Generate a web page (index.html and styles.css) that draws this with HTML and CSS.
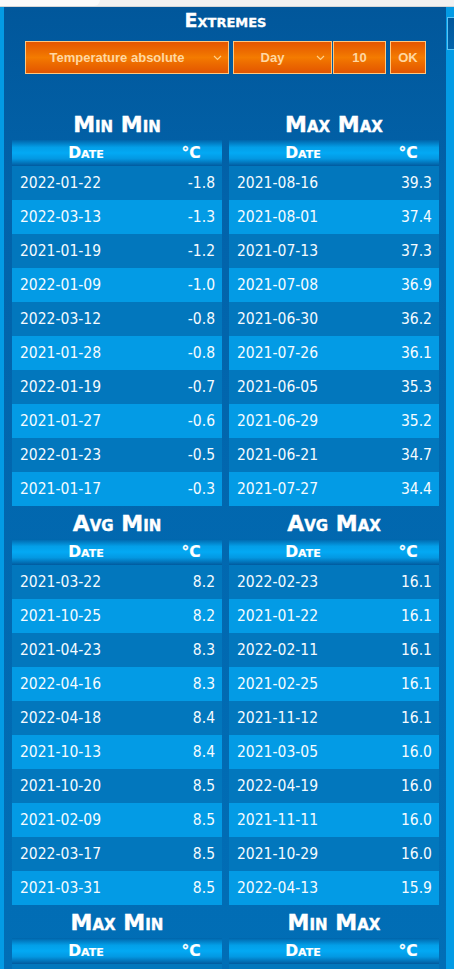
FILE: index.html
```html
<!DOCTYPE html>
<html>
<head>
<meta charset="utf-8">
<link rel="stylesheet" href="styles.css">
</head>
<body>
<div class="topbar"><div class="tab"></div></div>
<div class="frame">
  <main class="panel">
    <h1 class="title">Extremes</h1>
    <div class="controls">
      <div class="ctl select wide"><span>Temperature absolute</span><svg class="chev" width="9" height="6" viewBox="0 0 9 6"><polyline points="1,1 4.5,4.5 8,1" fill="none" stroke="#ffd08a" stroke-width="1.2"/></svg></div>
      <div class="joined">
        <div class="ctl select day"><span>Day</span><svg class="chev" width="9" height="6" viewBox="0 0 9 6"><polyline points="1,1 4.5,4.5 8,1" fill="none" stroke="#ffd08a" stroke-width="1.2"/></svg></div>
        <div class="ctl num">10</div>
      </div>
      <div class="ctl ok">OK</div>
    </div>
    <div class="grid">
      <section class="block">
        <h2 class="btitle">Min Min</h2>
        <table class="tbl">
          <thead><tr><th class="cd">Date</th><th class="cv">°C</th></tr></thead>
          <tbody>
            <tr><td class="d">2022-01-22</td><td class="v">-1.8</td></tr>
            <tr><td class="d">2022-03-13</td><td class="v">-1.3</td></tr>
            <tr><td class="d">2021-01-19</td><td class="v">-1.2</td></tr>
            <tr><td class="d">2022-01-09</td><td class="v">-1.0</td></tr>
            <tr><td class="d">2022-03-12</td><td class="v">-0.8</td></tr>
            <tr><td class="d">2021-01-28</td><td class="v">-0.8</td></tr>
            <tr><td class="d">2022-01-19</td><td class="v">-0.7</td></tr>
            <tr><td class="d">2021-01-27</td><td class="v">-0.6</td></tr>
            <tr><td class="d">2022-01-23</td><td class="v">-0.5</td></tr>
            <tr><td class="d">2021-01-17</td><td class="v">-0.3</td></tr>
          </tbody>
        </table>
      </section>
      <section class="block">
        <h2 class="btitle">Max Max</h2>
        <table class="tbl">
          <thead><tr><th class="cd">Date</th><th class="cv">°C</th></tr></thead>
          <tbody>
            <tr><td class="d">2021-08-16</td><td class="v">39.3</td></tr>
            <tr><td class="d">2021-08-01</td><td class="v">37.4</td></tr>
            <tr><td class="d">2021-07-13</td><td class="v">37.3</td></tr>
            <tr><td class="d">2021-07-08</td><td class="v">36.9</td></tr>
            <tr><td class="d">2021-06-30</td><td class="v">36.2</td></tr>
            <tr><td class="d">2021-07-26</td><td class="v">36.1</td></tr>
            <tr><td class="d">2021-06-05</td><td class="v">35.3</td></tr>
            <tr><td class="d">2021-06-29</td><td class="v">35.2</td></tr>
            <tr><td class="d">2021-06-21</td><td class="v">34.7</td></tr>
            <tr><td class="d">2021-07-27</td><td class="v">34.4</td></tr>
          </tbody>
        </table>
      </section>
      <section class="block">
        <h2 class="btitle">Avg Min</h2>
        <table class="tbl">
          <thead><tr><th class="cd">Date</th><th class="cv">°C</th></tr></thead>
          <tbody>
            <tr><td class="d">2021-03-22</td><td class="v">8.2</td></tr>
            <tr><td class="d">2021-10-25</td><td class="v">8.2</td></tr>
            <tr><td class="d">2021-04-23</td><td class="v">8.3</td></tr>
            <tr><td class="d">2022-04-16</td><td class="v">8.3</td></tr>
            <tr><td class="d">2022-04-18</td><td class="v">8.4</td></tr>
            <tr><td class="d">2021-10-13</td><td class="v">8.4</td></tr>
            <tr><td class="d">2021-10-20</td><td class="v">8.5</td></tr>
            <tr><td class="d">2021-02-09</td><td class="v">8.5</td></tr>
            <tr><td class="d">2022-03-17</td><td class="v">8.5</td></tr>
            <tr><td class="d">2021-03-31</td><td class="v">8.5</td></tr>
          </tbody>
        </table>
      </section>
      <section class="block">
        <h2 class="btitle">Avg Max</h2>
        <table class="tbl">
          <thead><tr><th class="cd">Date</th><th class="cv">°C</th></tr></thead>
          <tbody>
            <tr><td class="d">2022-02-23</td><td class="v">16.1</td></tr>
            <tr><td class="d">2021-01-22</td><td class="v">16.1</td></tr>
            <tr><td class="d">2022-02-11</td><td class="v">16.1</td></tr>
            <tr><td class="d">2021-02-25</td><td class="v">16.1</td></tr>
            <tr><td class="d">2021-11-12</td><td class="v">16.1</td></tr>
            <tr><td class="d">2021-03-05</td><td class="v">16.0</td></tr>
            <tr><td class="d">2022-04-19</td><td class="v">16.0</td></tr>
            <tr><td class="d">2021-11-11</td><td class="v">16.0</td></tr>
            <tr><td class="d">2021-10-29</td><td class="v">16.0</td></tr>
            <tr><td class="d">2022-04-13</td><td class="v">15.9</td></tr>
          </tbody>
        </table>
      </section>
      <section class="block">
        <h2 class="btitle">Max Min</h2>
        <table class="tbl">
          <thead><tr><th class="cd">Date</th><th class="cv">°C</th></tr></thead>
          <tbody>
            <tr><td class="d"></td><td class="v"></td></tr>
          </tbody>
        </table>
      </section>
      <section class="block">
        <h2 class="btitle">Min Max</h2>
        <table class="tbl">
          <thead><tr><th class="cd">Date</th><th class="cv">°C</th></tr></thead>
          <tbody>
            <tr><td class="d"></td><td class="v"></td></tr>
          </tbody>
        </table>
      </section>
    </div>
  </main>
  <aside class="side"><div class="thumb"></div></aside>
</div>
</body>
</html>
```
FILE: styles.css
```css
html, body {
  margin: 0;
  padding: 0;
}
body {
  background: #039be5;
  width: 454px;
  height: 969px;
  overflow: hidden;
  font-family: "DejaVu Sans Condensed", "DejaVu Sans", sans-serif;
  color: #fff;
}
.topbar {
  height: 6px;
  background: #f1f1f1;
  border-bottom: 1px solid #d6d6d6;
}
.tab {
  width: 100px;
  height: 6px;
  background: #fafafa;
  border-radius: 0 0 6px 0;
}
.frame {
  display: flex;
  padding-left: 4px;
}
.panel {
  width: 442px;
  box-sizing: border-box;
  padding: 0 7px 0 8px;
  background: linear-gradient(to bottom, #01579b 0%, #0263aa 20%, #016eb6 100%);
  height: 962px;
}
.title {
  margin: 0;
  height: 26px;
  line-height: 26px;
  text-align: center;
  font-family: "DejaVu Sans", sans-serif;
  font-weight: bold;
  font-size: 19px;
  font-variant: small-caps;
  -webkit-text-stroke: 0.3px #fff;
}
.controls {
  margin-top: 8px;
  display: flex;
  justify-content: center;
  gap: 4px;
  height: 33px;
}
.joined {
  display: flex;
  gap: 1px;
}
.ctl {
  box-sizing: border-box;
  height: 33px;
  border: 1px solid #ffc77e;
  background: linear-gradient(to bottom, #e55600 0%, #ee6f00 35%, #f47b00 50%, #ee6e00 65%, #e35500 100%);
  color: #ffd7a2;
  font-family: "Liberation Sans", Arial, sans-serif;
  font-weight: bold;
  font-size: 13px;
  display: flex;
  align-items: center;
  justify-content: center;
}
.select {
  padding-right: 20px;
  position: relative;
}
.chev {
  position: absolute;
  right: 6px;
  top: 13px;
}
.wide { width: 204px; }
.day { width: 99px; }
.num { width: 53px; }
.ok { width: 36px; }
.grid {
  margin-top: 33px;
  display: grid;
  grid-template-columns: 210px 210px;
  column-gap: 7px;
}
.btitle {
  margin: 0;
  height: 33px;
  line-height: 35px;
  text-align: center;
  font-family: "DejaVu Sans", sans-serif;
  font-weight: bold;
  font-size: 22px;
  font-variant: small-caps;
  -webkit-text-stroke: 0.4px #fff;
}
.tbl {
  width: 210px;
  border-collapse: collapse;
  border-spacing: 0;
  table-layout: fixed;
}
.tbl thead tr {
  background: linear-gradient(to bottom, #0064aa 0%, #039fe8 28%, #03a9f4 50%, #0398e2 72%, #015a9e 100%);
}
.tbl th {
  height: 26px;
  padding: 0;
  font-family: "DejaVu Sans", sans-serif;
  font-weight: bold;
  font-size: 15.5px;
  font-variant: small-caps;
  text-align: center;
  -webkit-text-stroke: 0.2px #fff;
}
.cd { width: 148px; }
.cv { width: 62px; }
.tbl td {
  height: 34px;
  padding: 0;
  font-size: 15.5px;
  color: #f5fbff;
}
.tbl tbody tr:nth-child(odd) { background: #0277bd; }
.tbl tbody tr:nth-child(even) { background: #039be5; }
.d { padding-left: 8px !important; }
.v { text-align: right; padding-right: 7px !important; }
.side {
  flex: 1;
  padding-left: 1px;
}
.thumb {
  margin-top: 10px;
  height: 33px;
  border: 1px solid #5bc4f5;
  border-right: none;
  box-sizing: border-box;
  background: linear-gradient(to bottom, #01579b, #0264ab);
}
```
